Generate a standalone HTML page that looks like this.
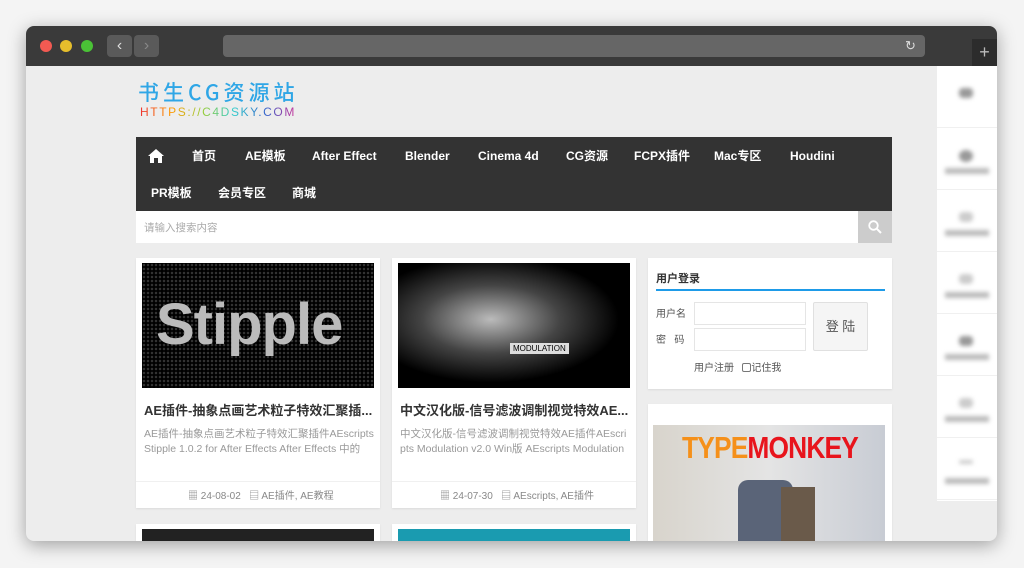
<!DOCTYPE html>
<html><head><meta charset="utf-8"><style>
*{margin:0;padding:0;box-sizing:border-box}
body{width:1024px;height:568px;background:#f4f4f4;font-family:"Liberation Sans","Noto Sans CJK SC",sans-serif;position:relative;overflow:hidden}
.win{position:absolute;left:26px;top:26px;width:971px;height:515px;background:#ededed;border-radius:8px;overflow:hidden;box-shadow:0 4px 18px rgba(0,0,0,.35)}
.bar{position:absolute;left:0;top:0;width:971px;height:40px;background:#3a3a3a}
.dot{position:absolute;top:14px;width:12px;height:12px;border-radius:50%}
.nb{position:absolute;top:9px;width:25px;height:22px;background:#5a5a5a;border-radius:4px;color:#ddd;font-size:16px;text-align:center;line-height:22px}
.url{position:absolute;left:197px;top:9px;width:702px;height:22px;background:#666;border-radius:4px}
.abs{position:absolute}
.nav{position:absolute;left:110px;top:111px;width:756px;height:74px;background:#333}
.nav span{position:absolute;color:#fff;font-weight:bold;font-size:12px;line-height:14px;height:14px}
.card{position:absolute;background:#fff;box-shadow:0 1px 2px rgba(0,0,0,.08)}
.t{position:absolute;font-size:13px;font-weight:bold;color:#333;white-space:nowrap;line-height:16px}
.d{position:absolute;font-size:10.5px;color:#999;line-height:15px;word-break:break-all}
.m{position:absolute;font-size:10px;color:#888;line-height:12px}
.side{position:absolute;left:911px;top:40px;width:60px;height:435px;background:#fff}
.side div{height:62px;border-bottom:1px solid #f0f0f0;position:relative}
.side i{position:absolute;left:22px;top:22px;width:14px;height:10px;background:#999;border-radius:4px;filter:blur(2px)}
.side b{position:absolute;left:8px;top:40px;width:44px;height:6px;background:#bbb;filter:blur(2px)}
</style></head><body>
<div class="win">
<div class="bar">
<div class="dot" style="left:14px;background:#f25a52"></div>
<div class="dot" style="left:34px;background:#e6be2c"></div>
<div class="dot" style="left:55px;background:#4ac236"></div>
<div class="nb" style="left:81px">‹</div><div class="nb" style="left:108px;color:#888">›</div>
<div class="url"></div>
<div class="abs" style="left:879px;top:12px;color:#ddd;font-size:13px">↻</div>
<div class="abs" style="left:946px;top:13px;width:25px;height:27px;background:#2c2c2c;color:#bbb;font-size:18px;text-align:center;line-height:27px">+</div>
</div>
<div class="abs" style="left:112px;top:53px;font-size:21px;line-height:26px;color:#2fa6e6;font-family:'Noto Sans CJK SC',sans-serif;letter-spacing:4px;font-weight:500">书生CG资源站</div>
<div class="abs" style="left:114px;top:80px;font-size:12px;line-height:13px;letter-spacing:1.6px;background:linear-gradient(90deg,#e33,#f90,#9c3,#3cc,#36c,#c39);-webkit-background-clip:text;color:transparent">HTTPS://C4DSKY.COM</div>
<div class="nav">
<svg class="abs" style="left:12px;top:12px" width="16" height="14" viewBox="0 0 16 14"><path d="M8 0L0 7h2v7h4V9h4v5h4V7h2z" fill="#fff"/></svg>
<span style="left:56px;top:12px">首页</span><span style="left:109px;top:12px">AE模板</span><span style="left:176px;top:12px">After Effect</span><span style="left:269px;top:12px">Blender</span><span style="left:342px;top:12px">Cinema 4d</span><span style="left:430px;top:12px">CG资源</span><span style="left:498px;top:12px">FCPX插件</span><span style="left:578px;top:12px">Mac专区</span><span style="left:654px;top:12px">Houdini</span>
<span style="left:15px;top:49px">PR模板</span><span style="left:82px;top:49px">会员专区</span><span style="left:156px;top:49px">商城</span>
</div>
<div class="abs" style="left:110px;top:185px;width:722px;height:32px;background:#fff;font-size:10.5px;color:#aaa;padding:9px 8px">请输入搜索内容</div>
<div class="abs" style="left:832px;top:185px;width:34px;height:32px;background:#ccc"><svg style="margin:9px 10px" width="14" height="14" viewBox="0 0 14 14"><circle cx="5.5" cy="5.5" r="4.3" stroke="#fff" stroke-width="1.8" fill="none"/><path d="M8.6 8.6L13 13" stroke="#fff" stroke-width="2"/></svg></div>

<div class="card" style="left:110px;top:232px;width:244px;height:250px">
<div class="abs" style="left:6px;top:5px;width:232px;height:125px;background:radial-gradient(#333 1px,#000 1.5px) 0 0/4px 4px;overflow:hidden"><div class="abs" style="left:14px;top:28px;font-size:58px;font-weight:bold;color:#bbb;letter-spacing:-1px">Stipple</div></div>
<div class="t" style="left:8px;top:145px">AE插件-抽象点画艺术粒子特效汇聚插...</div>
<div class="d" style="left:8px;top:169px;width:230px">AE插件-抽象点画艺术粒子特效汇聚插件AEscripts Stipple 1.0.2 for After Effects After Effects 中的</div>
<div class="abs" style="left:0;top:223px;width:244px;border-top:1px solid #f0f0f0"></div>
<div class="m" style="left:52px;top:233px">▦ 24-08-02 &nbsp; ▤ AE插件, AE教程</div>
</div>
<div class="card" style="left:366px;top:232px;width:244px;height:250px">
<div class="abs" style="left:6px;top:5px;width:232px;height:125px;background:radial-gradient(ellipse at 40% 45%,#bbb,#444 35%,#000 65%)"><div class="abs" style="left:112px;top:80px;background:#ddd;font-size:8px;padding:1px 3px;color:#000">MODULATION</div></div>
<div class="t" style="left:8px;top:145px">中文汉化版-信号滤波调制视觉特效AE...</div>
<div class="d" style="left:8px;top:169px;width:232px">中文汉化版-信号滤波调制视觉特效AE插件AEscripts Modulation v2.0 Win版 AEscripts Modulation</div>
<div class="abs" style="left:0;top:223px;width:244px;border-top:1px solid #f0f0f0"></div>
<div class="m" style="left:48px;top:233px">▦ 24-07-30 &nbsp; ▤ AEscripts, AE插件</div>
</div>
<div class="card" style="left:110px;top:498px;width:244px;height:30px"><div class="abs" style="left:6px;top:5px;width:232px;height:20px;background:#222"></div></div>
<div class="card" style="left:366px;top:498px;width:244px;height:30px"><div class="abs" style="left:6px;top:5px;width:232px;height:20px;background:#1a9bb0"></div></div>

<div class="card" style="left:622px;top:232px;width:244px;height:131px">
<div class="abs" style="left:8px;top:14px;font-size:11px;font-weight:bold;color:#333;line-height:14px">用户登录</div>
<div class="abs" style="left:8px;top:31px;width:229px;height:2px;background:#1e9be8"></div>
<div class="abs" style="left:8px;top:51px;font-size:10px;color:#555;line-height:12px">用户名</div>
<div class="abs" style="left:8px;top:77px;font-size:10px;color:#555;line-height:12px">密 &nbsp; 码</div>
<div class="abs" style="left:46px;top:44px;width:112px;height:23px;border:1px solid #e5e5e5"></div>
<div class="abs" style="left:46px;top:70px;width:112px;height:23px;border:1px solid #e5e5e5"></div>
<div class="abs" style="left:165px;top:44px;width:55px;height:49px;border:1px solid #e0e0e0;background:#f5f5f5;border-radius:2px;font-size:13px;color:#555;text-align:center;line-height:47px">登 陆</div>
<div class="abs" style="left:46px;top:105px;font-size:10px;color:#555;line-height:12px">用户注册 &nbsp; <span style="display:inline-block;width:9px;height:9px;border:1px solid #777;border-radius:2px;vertical-align:-1px"></span>记住我</div>
</div>
<div class="card" style="left:622px;top:378px;width:244px;height:140px">
<div class="abs" style="left:5px;top:21px;width:232px;height:119px;background:linear-gradient(90deg,#d8d4cc,#e4e4e4 50%,#c8ccd4)">
<div class="abs" style="left:29px;top:5px;font-size:31px;font-weight:bold;letter-spacing:-1px;transform:scaleX(.85);transform-origin:left"><span style="color:#f5901a">TYPE</span><span style="color:#e8141c">MONKEY</span></div>
<div class="abs" style="left:85px;top:55px;width:55px;height:64px;background:#5a6478;border-radius:10px 10px 0 0"></div>
<div class="abs" style="left:128px;top:62px;width:34px;height:57px;background:#6a5a4a"></div>
</div></div>

<div class="side"><div><i></i></div><div><i style="border-radius:50%;height:12px"></i><b></b></div><div><i style="background:#ccc"></i><b></b></div><div><i style="background:#ccc"></i><b></b></div><div><i></i><b></b></div><div><i style="background:#ccc"></i><b></b></div><div><i style="background:#ccc;height:4px"></i><b></b></div></div>
</div>
</body></html>
